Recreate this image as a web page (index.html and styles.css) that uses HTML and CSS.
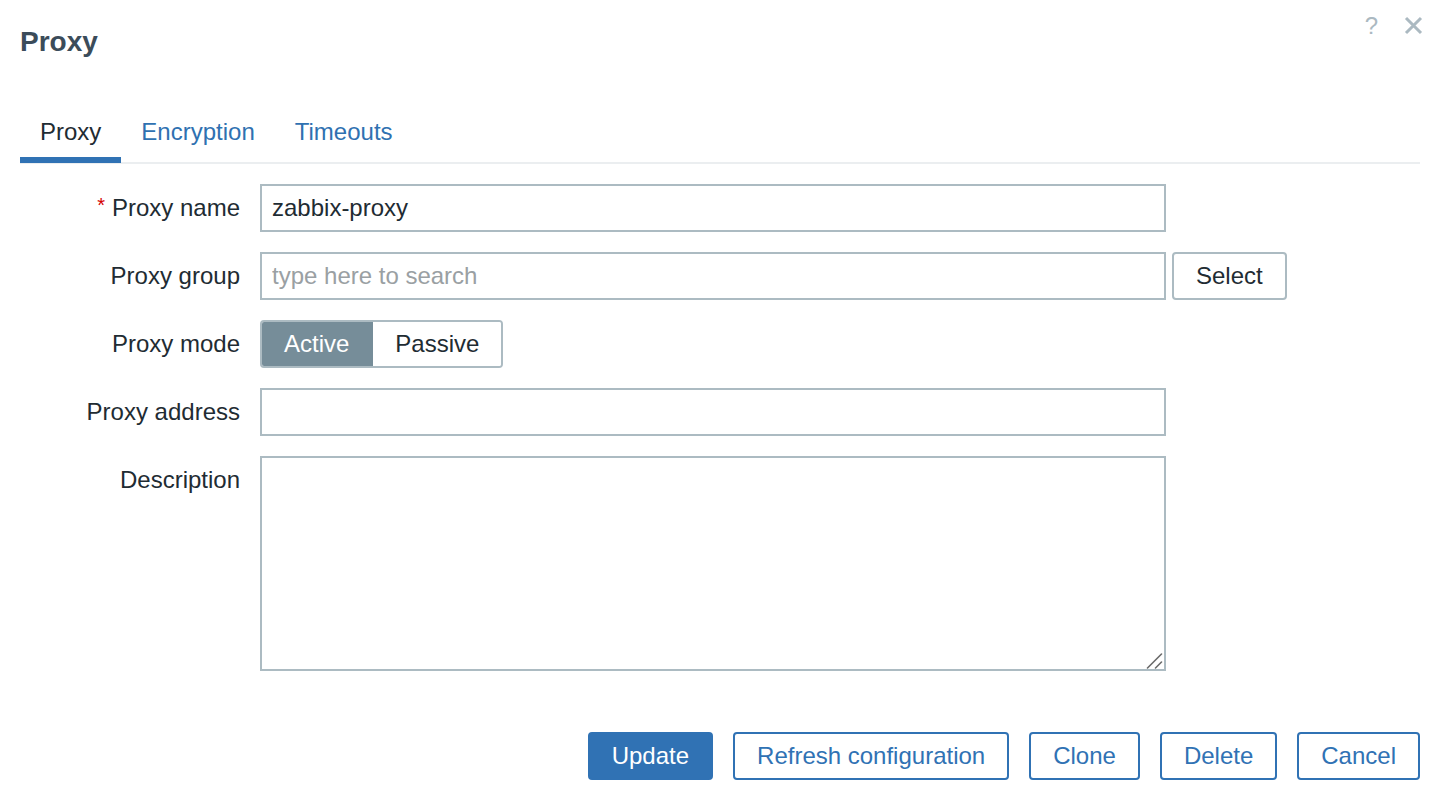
FILE: index.html
```html
<!DOCTYPE html>
<html lang="en">
<head>
<meta charset="utf-8">
<title>Proxy</title>
<link rel="stylesheet" href="styles.css">
</head>
<body>
<div class="dialog">
  <div class="dialog-head">
    <h1 class="dialog-title">Proxy</h1>
    <div class="head-actions">
      <span class="help-btn">?</span>
      <span class="close-btn">
        <svg width="19" height="19" viewBox="0 0 19 19"><path d="M2 2 L17 17 M17 2 L2 17" stroke="#abb9c1" stroke-width="3" fill="none"/></svg>
      </span>
    </div>
  </div>

  <ul class="tabs">
    <li class="tab tab-active">Proxy</li>
    <li class="tab">Encryption</li>
    <li class="tab">Timeouts</li>
  </ul>

  <div class="form">
    <label class="form-label"><span class="asterisk">*</span>Proxy name</label>
    <div class="form-field"><input class="text-input" type="text" value="zabbix-proxy"></div>

    <label class="form-label">Proxy group</label>
    <div class="form-field field-row">
      <input class="text-input" type="text" placeholder="type here to search">
      <button class="btn-alt">Select</button>
    </div>

    <label class="form-label">Proxy mode</label>
    <div class="form-field">
      <div class="radio-list">
        <span class="radio-item radio-on">Active</span>
        <span class="radio-item">Passive</span>
      </div>
    </div>

    <label class="form-label">Proxy address</label>
    <div class="form-field"><input class="text-input" type="text"></div>

    <label class="form-label">Description</label>
    <div class="form-field area-wrap">
      <textarea class="text-area"></textarea>
      <svg class="grip" width="17" height="16" viewBox="0 0 17 16"><path d="M1.5 15 L15.5 1 M9.5 15 L15.5 9" stroke="#6b6b6b" stroke-width="1.6" stroke-linecap="round" fill="none"/></svg>
    </div>
  </div>

  <div class="footer">
    <button class="btn btn-primary">Update</button>
    <button class="btn">Refresh configuration</button>
    <button class="btn">Clone</button>
    <button class="btn">Delete</button>
    <button class="btn">Cancel</button>
  </div>
</div>
</body>
</html>
```
FILE: styles.css
```css
* { box-sizing: border-box; }
html, body {
  margin: 0;
  padding: 0;
  background: #ffffff;
}
body {
  font-family: "Liberation Sans", Arial, sans-serif;
  font-size: 24px;
  color: #1f2c33;
}
.dialog {
  padding: 0 16px 0 20px;
  width: 1436px;
}
.dialog-head {
  display: flex;
  justify-content: space-between;
  align-items: flex-start;
  padding-top: 26px;
}
.dialog-title {
  margin: 0;
  font-size: 28px;
  line-height: 32px;
  font-weight: bold;
  color: #3b4c5a;
}
.head-actions {
  display: flex;
  align-items: center;
  gap: 26px;
  margin-top: -12px;
  margin-right: -3px;
}
.help-btn {
  font-size: 24px;
  line-height: 22px;
  color: #abb9c1;
  height: 22px;
  padding-top: 1px;
}
.close-btn {
  display: block;
  width: 19px;
  height: 19px;
}
.close-btn svg { display: block; }

.tabs {
  list-style: none;
  margin: 59px 0 0 0;
  padding: 0;
  display: flex;
  border-bottom: 2px solid #ebeef0;
  height: 47px;
}
.tab {
  padding: 0 20px 10px;
  line-height: 30px;
  color: #2f71b1;
  border-bottom: 6px solid transparent;
  height: 46px;
}
.tab-active {
  color: #1f2c33;
  border-bottom-color: #3072b4;
}

.form {
  display: grid;
  grid-template-columns: 220px 906px;
  column-gap: 20px;
  row-gap: 20px;
  margin-top: 20px;
}
.form-label {
  text-align: right;
  line-height: 48px;
  height: 48px;
  white-space: nowrap;
}
.asterisk {
  position: relative;
  top: -4px;
  color: #d40000;
  font-size: 20px;
  line-height: 0;
  margin-right: 7px;
}
.form-field { min-width: 0; }
.field-row {
  display: flex;
  gap: 6px;
  width: 1027px;
}
.text-input {
  display: block;
  width: 906px;
  flex: 0 0 906px;
  height: 48px;
  border: 2px solid #acbbc2;
  border-radius: 0;
  padding: 0 10px;
  font-family: inherit;
  font-size: 24px;
  color: #1f2c33;
  background: #ffffff;
  outline: none;
}
.text-input::placeholder { color: #9aa0a3; }
.btn-alt {
  height: 48px;
  padding: 0 22px;
  border: 2px solid #acbbc2;
  border-radius: 4px;
  background: #ffffff;
  font-family: inherit;
  font-size: 24px;
  color: #1f2c33;
}
.radio-list {
  display: inline-flex;
  height: 48px;
  border: 2px solid #acbbc2;
  border-radius: 4px;
  overflow: hidden;
}
.radio-item {
  line-height: 44px;
  padding: 0 22px;
  color: #1f2c33;
  background: #ffffff;
}
.radio-on {
  padding: 0 24px 0 22px;
  background: #768d99;
  color: #ffffff;
}
.area-wrap {
  position: relative;
  width: 906px;
  height: 215px;
}
.text-area {
  display: block;
  width: 906px;
  height: 215px;
  border: 2px solid #acbbc2;
  border-radius: 0;
  padding: 8px 10px;
  font-family: inherit;
  font-size: 24px;
  resize: none;
  outline: none;
}
.grip {
  position: absolute;
  right: 3px;
  bottom: 2px;
  display: block;
}

.footer {
  display: flex;
  justify-content: flex-end;
  gap: 20px;
  margin-top: 61px;
}
.btn {
  height: 48px;
  padding: 0 22px;
  border: 2px solid #3072b4;
  border-radius: 4px;
  background: #ffffff;
  color: #3072b4;
  font-family: inherit;
  font-size: 24px;
  white-space: nowrap;
}
.btn-primary {
  background: #3072b4;
  color: #ffffff;
}
```
